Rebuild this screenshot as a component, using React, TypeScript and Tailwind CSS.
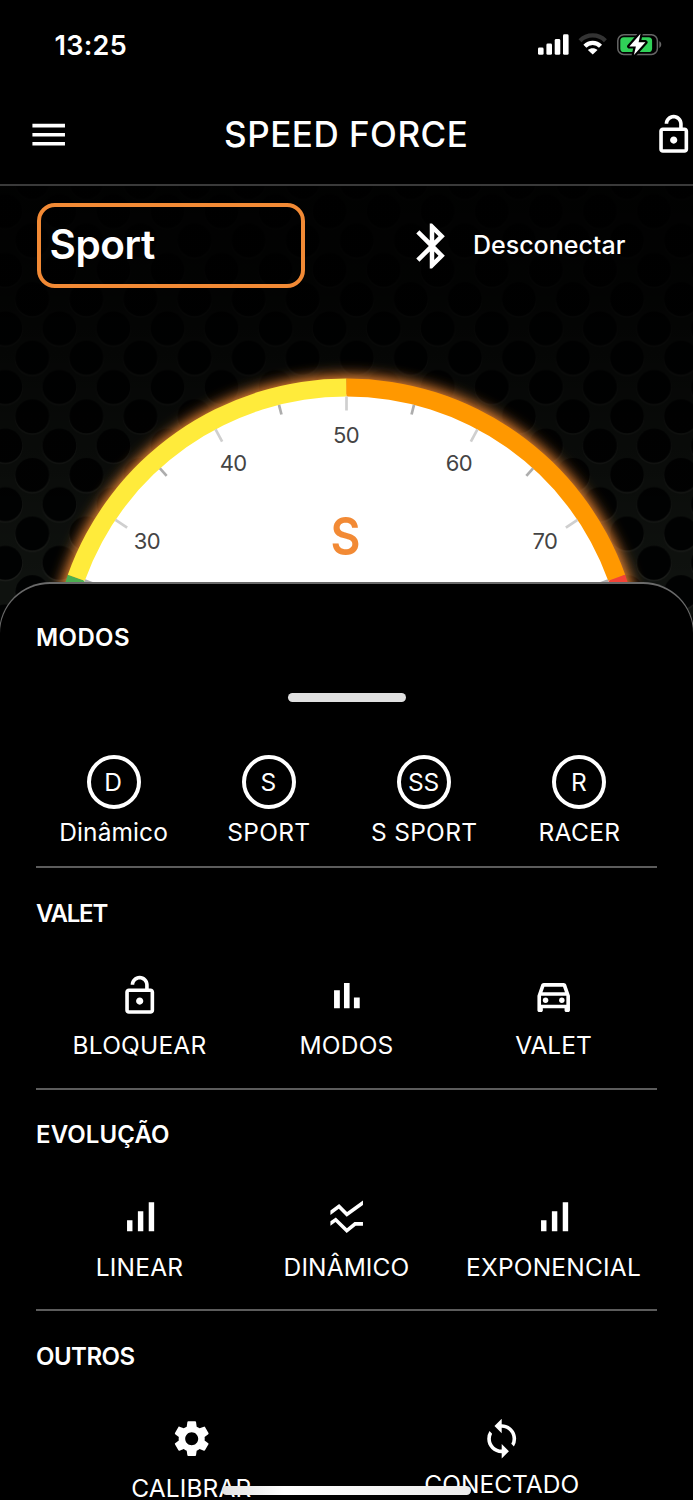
import type { ReactNode } from 'react'
import {
  MdBluetooth,
  MdMenu,
  MdOutlineDirectionsCar,
  MdOutlineLockOpen,
  MdSettings,
  MdSignalCellularAlt,
  MdSsidChart,
  MdSync,
} from 'react-icons/md'

const CX = 346.5
const CY = 488.5
const OUTER = 296
const INNER = 278

// 0 is straight up, values go clockwise
function polar(r: number, deg: number) {
  const a = (deg * Math.PI) / 180
  return { x: CX + r * Math.sin(a), y: CY - r * Math.cos(a) }
}

function band(from: number, to: number) {
  const a = polar(OUTER, from)
  const b = polar(OUTER, to)
  const c = polar(INNER, to)
  const d = polar(INNER, from)
  return `M${a.x} ${a.y}A${OUTER} ${OUTER} 0 0 1 ${b.x} ${b.y}L${c.x} ${c.y}A${INNER} ${INNER} 0 0 0 ${d.x} ${d.y}Z`
}

const ticks = [25, 30, 35, 40, 45, 50, 55, 60, 65, 70, 75]

function Gauge() {
  return (
    <svg className="absolute inset-0" width="693" height="464" viewBox="0 0 693 464">
      <defs>
        <pattern id="mesh" width="54.06" height="58.6" patternUnits="userSpaceOnUse" x="5.3" y="201.4">
          <rect width="54.06" height="58.6" fill="#0f120f" />
          {[
            [27.03, 29.3],
            [0, 0],
            [54.06, 0],
            [0, 58.6],
            [54.06, 58.6],
          ].map(([x, y]) => (
            <g key={`${x}-${y}`}>
              <circle cx={x} cy={y + 0.8} r="17.4" fill="#1b1d1a" />
              <circle cx={x} cy={y - 0.4} r="17" fill="#010202" />
            </g>
          ))}
        </pattern>
        <linearGradient id="fade" x1="0" y1="0" x2="0" y2="1">
          <stop offset="0" stopColor="#000" stopOpacity="0.92" />
          <stop offset="0.2" stopColor="#000" stopOpacity="0.85" />
          <stop offset="0.45" stopColor="#000" stopOpacity="0.55" />
          <stop offset="0.85" stopColor="#000" stopOpacity="0" />
        </linearGradient>
        <filter id="glow" x="-10%" y="-10%" width="120%" height="120%">
          <feGaussianBlur stdDeviation="7" />
        </filter>
      </defs>
      <rect width="693" height="464" fill="url(#mesh)" />
      <rect width="693" height="464" fill="url(#fade)" />
      <circle cx={CX} cy={CY} r="299" fill="#f68b36" filter="url(#glow)" />
      <circle cx={CX} cy={CY} r="280" fill="#fff" />
      <path d={band(-90, -70.3)} fill="#4caf50" />
      <path d={band(-70.3, 0)} fill="#ffeb3b" />
      <path d={band(0, 70.3)} fill="#ff9800" />
      <path d={band(70.3, 90)} fill="#f44336" />
      {ticks.map((value) => {
        const major = value % 10 === 0
        const deg = (value - 50) * 2.81
        const a = polar(INNER, deg)
        const b = polar(INNER - (major ? 14 : 10), deg)
        return (
          <line
            key={value}
            x1={a.x}
            y1={a.y}
            x2={b.x}
            y2={b.y}
            stroke={major ? '#cfcfcf' : '#adadad'}
            strokeWidth="2.7"
          />
        )
      })}
      {[30, 40, 50, 60, 70].map((value) => {
        const p = polar(239.5, (value - 50) * 2.81)
        return (
          <text
            key={value}
            x={p.x - 0.5}
            y={p.y + 8.2}
            textAnchor="middle"
            className="fill-[#444] font-['Inter',sans-serif] text-[22px]"
            letterSpacing="-0.6"
          >
            {value}
          </text>
        )
      })}
      <text
        x="345.5"
        y="369"
        textAnchor="middle"
        textLength="30"
        lengthAdjust="spacingAndGlyphs"
        className="fill-[#f28a35] font-['Inter',sans-serif] text-[52px] font-semibold"
      >
        S
      </text>
    </svg>
  )
}

function StatusIcons() {
  return (
    <svg width="126" height="26" viewBox="537 32 126 26">
      <g fill="#fff">
        <rect x="538" y="47.5" width="5.6" height="7.3" rx="1.4" />
        <rect x="546.4" y="43.6" width="5.6" height="11.2" rx="1.4" />
        <rect x="554.7" y="39" width="5.6" height="15.8" rx="1.4" />
        <rect x="563" y="34.3" width="5.6" height="20.5" rx="1.4" />
        <path d="M592.7 54.6l-4.8-4.7c2.6-2.2 7-2.2 9.6 0z" />
      </g>
      <path d="M584.9 46.2c4.2-4.4 11.4-4.4 15.6 0" fill="none" stroke="#fff" strokeWidth="4.2" />
      <path d="M580 40.7c7-7 18.4-7 25.4 0" fill="none" stroke="#333" strokeWidth="4.2" />
      <rect x="617.8" y="34.8" width="39.6" height="19.6" rx="6" fill="none" stroke="#666" strokeWidth="1.5" />
      <path d="M659.3 41.3c2.6 1 2.6 5.6 0 6.6z" fill="#666" />
      <rect x="620.3" y="37.2" width="31.8" height="14.8" rx="3.6" fill="#30d158" />
      <path
        d="M640.5 33.8l-11.2 12.6h6.6l-2 8.7 11.5-12.8h-6.8z"
        fill="#fff"
        stroke="#000"
        strokeWidth="4.4"
        strokeLinejoin="round"
        paintOrder="stroke"
      />
    </svg>
  )
}

function BarsIcon() {
  return (
    <svg width="1em" height="1em" viewBox="0 0 24 24" fill="currentColor">
      <path d="M5 9h3.2v10H5zM10.5 5h3.1v14h-3.1zM16 13h3.2v6H16z" />
    </svg>
  )
}

function Badge({ children }: { children: ReactNode }) {
  return (
    <div className="flex size-[54px] items-center justify-center rounded-full border-4 border-white pr-px text-[24.5px] leading-none">
      {children}
    </div>
  )
}

function SectionTitle({ children, spacing }: { children: string; spacing: string }) {
  return <h2 className={`h-[30px] text-[24px] leading-[30px] font-semibold ${spacing}`}>{children}</h2>
}

type Item = { label: string; icon: ReactNode; spacing: string }

function Section({ title, titleSpacing, items }: { title: string; titleSpacing: string; items: Item[] }) {
  return (
    <section className="h-[221.6px] border-b-2 border-[#5c5c5c] pt-[30.5px]">
      <SectionTitle spacing={titleSpacing}>{title}</SectionTitle>
      <div className="mt-[45px] flex">
        {items.map((item) => (
          <div key={item.label} className="flex flex-1 flex-col items-center text-[43.4px]">
            {item.icon}
            <span className={`mt-[13.5px] text-[24.5px] leading-[30px] whitespace-nowrap ${item.spacing}`}>
              {item.label}
            </span>
          </div>
        ))}
      </div>
    </section>
  )
}

const modes = [
  { letter: 'D', label: 'Dinâmico', spacing: 'tracking-[0.1px]' },
  { letter: 'S', label: 'SPORT', spacing: 'tracking-[0.3px]' },
  { letter: 'SS', label: 'S SPORT', spacing: 'tracking-[0.3px]' },
  { letter: 'R', label: 'RACER', spacing: 'tracking-[0.3px]' },
]

const valet: Item[] = [
  { label: 'BLOQUEAR', icon: <MdOutlineLockOpen />, spacing: 'tracking-[0.2px]' },
  { label: 'MODOS', icon: <BarsIcon />, spacing: 'tracking-[0.2px]' },
  { label: 'VALET', icon: <MdOutlineDirectionsCar />, spacing: 'tracking-[0px]' },
]

const evolution: Item[] = [
  { label: 'LINEAR', icon: <MdSignalCellularAlt />, spacing: 'tracking-[0.2px]' },
  { label: 'DINÂMICO', icon: <MdSsidChart />, spacing: 'tracking-[0.1px]' },
  { label: 'EXPONENCIAL', icon: <MdSignalCellularAlt />, spacing: 'tracking-[0.2px]' },
]

function App() {
  return (
    <div className="relative h-[1500px] w-[693px] overflow-hidden bg-black font-['Inter',sans-serif] text-white">
      <div className="flex h-[90px] items-center justify-between pr-[30px] pl-[54.5px]">
        <span className="pt-[2px] text-[27px] font-semibold tracking-[0.3px]">13:25</span>
        <StatusIcons />
      </div>
      <header className="grid h-[96px] grid-cols-[1fr_auto_1fr] items-center border-b-2 border-[#3a3a3a] pb-[5px] pl-[26.5px] text-[43.4px]">
        <MdMenu />
        <h1 className="-ml-[27px] text-[35px] leading-none font-medium tracking-[0.5px]">SPEED FORCE</h1>
        <MdOutlineLockOpen className="mr-[-2px] justify-self-end" />
      </header>

      <main className="relative h-[464px]">
        <Gauge />
        <div className="relative flex items-center pt-[17px] pl-[37px]">
          <div className="flex h-[85px] w-[268px] items-center rounded-[18px] border-4 border-[#f28a35] pl-[8.5px] text-[40.5px] font-semibold tracking-[-0.4px]">
            Sport
          </div>
          <MdBluetooth className="ml-[100px] size-[54px]" />
          <span className="ml-[14px] text-[25px] font-medium">Desconectar</span>
        </div>
      </main>

      <div className="relative -mx-px -mt-[68px] h-[918px] rounded-t-[51px] border-t-2 border-r border-l border-[#6a6a6a] bg-black px-[36px]">
        <section className="h-[284px] border-b-2 border-[#5c5c5c] pt-[39px]">
          <SectionTitle spacing="tracking-[0.4px]">MODOS</SectionTitle>
          <div className="mx-auto mt-[39.5px] h-[9.5px] w-[118px] rounded-full bg-[#e0e0e0]" />
          <div className="mt-[53px] flex">
            {modes.map((mode) => (
              <div key={mode.letter} className="flex flex-1 flex-col items-center">
                <Badge>{mode.letter}</Badge>
                <span className={`mt-[8px] text-[24.5px] leading-[30px] whitespace-nowrap ${mode.spacing}`}>
                  {mode.label}
                </span>
              </div>
            ))}
          </div>
        </section>

        <Section title="VALET" titleSpacing="tracking-[-1.2px]" items={valet} />
        <Section title="EVOLUÇÃO" titleSpacing="tracking-[0.1px]" items={evolution} />

        <section className="pt-[30.5px]">
          <SectionTitle spacing="tracking-[-0.5px]">OUTROS</SectionTitle>
          <div className="mt-[45px] flex text-[43.4px]">
            <div className="flex flex-1 flex-col items-center">
              <MdSettings />
              <span className="mt-[18px] text-[24.5px] leading-[20px] tracking-[0.1px]">CALIBRAR</span>
            </div>
            <div className="flex flex-1 flex-col items-center">
              <MdSync />
              <span className="mt-[13.5px] text-[24.5px] leading-[20px]">CONECTADO</span>
            </div>
          </div>
        </section>
      </div>

      {/* home indicator */}
      <div className="absolute bottom-[5px] left-[222px] h-[9px] w-[249px] rounded-full bg-linear-to-r from-[#e2e2e2] via-white via-25% to-[#ececec]" />
    </div>
  )
}

export default App
